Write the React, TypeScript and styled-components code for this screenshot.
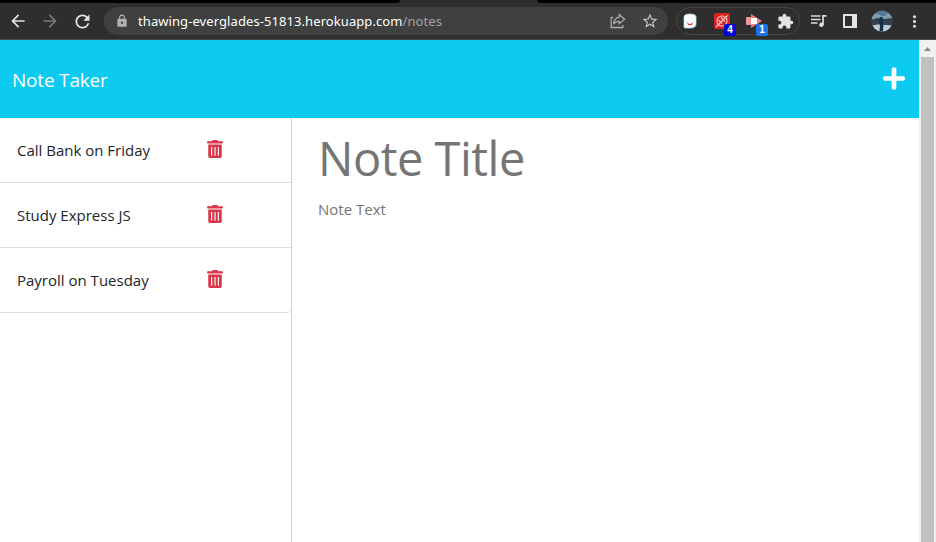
import React from 'react';
import styled, { createGlobalStyle } from 'styled-components';
import { FaPlus, FaTrashAlt } from 'react-icons/fa';
import {
  MdArrowBack,
  MdArrowForward,
  MdRefresh,
  MdLock,
  MdStarOutline,
  MdExtension,
  MdMoreVert,
} from 'react-icons/md';

const GlobalStyle = createGlobalStyle`
  * { box-sizing: border-box; }
  body {
    margin: 0;
    overflow: hidden;
    background: #fff;
    font-family: "Noto Sans", "Open Sans", sans-serif;
  }
  svg { display: block; flex: none; }
`;

const Window = styled.div`
  display: flex;
  flex-direction: column;
  width: 936px;
  height: 542px;
  overflow: hidden;
`;

const TabStrip = styled.div`
  display: flex;
  height: 3px;
  flex: none;
  background: #2e2e2e;
`;

const InactiveTabs = styled.div<{ $width: number; $side: 'left' | 'right' }>`
  width: ${(p) => p.$width}px;
  margin-left: ${(p) => (p.$side === 'right' ? 'auto' : 0)};
  background: #000;
  border-radius: ${(p) => (p.$side === 'left' ? '0 0 4px 0' : '0 0 0 4px')};
`;

const Toolbar = styled.div`
  display: flex;
  align-items: center;
  height: 37px;
  flex: none;
  padding-left: 8px;
  background: #2e2e2e;
  border-bottom: 1px solid #46494a;
`;

const ToolButton = styled.div<{ $width: number; $color?: string }>`
  position: relative;
  display: flex;
  flex: none;
  align-items: center;
  justify-content: center;
  width: ${(p) => p.$width}px;
  height: 28px;
  color: ${(p) => p.$color ?? '#e4e4e4'};
`;

const AddressBar = styled.div`
  display: flex;
  flex: none;
  align-items: center;
  width: 564px;
  height: 28px;
  margin-left: 12px;
  padding-left: 11px;
  border-radius: 14px;
  background: #404040;
  color: #b4b1b8;
`;

const Url = styled.div`
  margin-left: 9px;
  margin-right: auto;
  color: #a3a3a3;
  font-size: 13px;
  line-height: 20px;
  letter-spacing: 0.08px;
  white-space: nowrap;
`;

const Host = styled.span`
  color: #fff;
`;

const Extensions = styled.div`
  display: flex;
  flex: none;
  align-items: center;
  width: 124px;
  height: 28px;
  margin-left: 8px;
  border: 1px solid #454545;
  border-radius: 14px;
`;

const Badge = styled.span<{ $color: string; $left: number }>`
  position: absolute;
  left: ${(p) => p.$left}px;
  top: 17px;
  width: 12px;
  height: 12px;
  border-radius: 2px;
  background: ${(p) => p.$color};
  color: #fff;
  font: bold 10px/12px "Liberation Sans", sans-serif;
  text-align: center;
`;

const Viewport = styled.div`
  display: flex;
  flex: 1;
  min-height: 0;
`;

const Page = styled.div`
  display: flex;
  flex-direction: column;
  flex: 1;
  font-family: "Open Sans", "Noto Sans", sans-serif;
`;

const Header = styled.header`
  display: flex;
  align-items: center;
  justify-content: space-between;
  height: 78px;
  padding: 0 14px 0 12px;
  background: #0dcaf0;
  color: #fff;
`;

const Brand = styled.h1`
  margin: 2px 0 0;
  font-weight: 400;
  font-size: 19px;
  line-height: 30px;
  letter-spacing: -0.2px;
`;

const AddIcon = styled(FaPlus)`
  width: 22px;
  height: 25px;
  margin-top: -2px;
`;

const Content = styled.main`
  display: flex;
  flex: 1;
`;

const Sidebar = styled.aside`
  width: 292px;
  border-right: 1px solid #cdcfd1;
`;

const NoteList = styled.ul`
  margin: 0;
  padding: 0;
  list-style: none;
`;

const NoteItem = styled.li`
  display: flex;
  align-items: center;
  height: 65px;
  padding-left: 17px;
  border-bottom: 1px solid #dcdddf;
  color: #212529;
  font-size: 15px;
  &:last-child {
    border-bottom-right-radius: 4px;
  }
`;

const NoteName = styled.span`
  width: 190px;
  line-height: 24px;
  white-space: nowrap;
`;

const DeleteIcon = styled(FaTrashAlt)`
  width: 16px;
  height: 18px;
  margin-top: -2px;
  color: #d9364a;
`;

const Editor = styled.section`
  flex: 1;
  padding: 8px 26px;
  color: #757575;
`;

const TitleField = styled.div`
  height: 66px;
  font-size: 47px;
  line-height: 64px;
  letter-spacing: -0.5px;
`;

const TextField = styled.div`
  margin-top: 5px;
  font-size: 15px;
  line-height: 24px;
`;

const Scrollbar = styled.div`
  display: flex;
  flex-direction: column;
  align-items: center;
  width: 17px;
  background: #f1f1f1;
`;

const ScrollArrow = styled.div`
  display: flex;
  align-items: center;
  height: 17px;
`;

const ScrollThumb = styled.div`
  flex: 1;
  width: 13px;
  background: #c1c1c1;
`;

const ShareIcon = () => (
  <svg width="16" height="16" viewBox="0 0 16 16" fill="none" stroke="#aaa" strokeWidth="1.3">
    <path d="M3.2 4.5H1.2V14.5H12.8V12" />
    <path d="M9.2 1.5L14.6 6.2L9.2 10.7V8.3C6.2 8.2 4.6 9.2 3.4 11.2C3.8 7.2 5.8 4.7 9.2 4.1Z" />
  </svg>
);

const GhostIcon = () => (
  <svg width="14" height="16" viewBox="0 0 14 16">
    <path d="M1 4Q1 1 7 1T13 4V11Q13 15 7 15H2Q0.5 15 1 12Z" fill="#fff" stroke="#a9d9f2" strokeWidth=".8" />
    <circle cx="4" cy="9" r=".6" fill="#8ac" />
    <circle cx="10" cy="9" r=".6" fill="#8ac" />
    <path d="M4.5 10.3Q7 13 9.5 10.3" fill="none" stroke="#d7372f" strokeWidth="1.2" />
  </svg>
);

const BlockerIcon = () => (
  <svg width="16" height="16" viewBox="0 0 16 16" fill="none" stroke="#f9cbc8">
    <rect width="16" height="16" rx="1.5" fill="#d72323" stroke="none" />
    <circle cx="8" cy="8" r="5" strokeWidth="1.1" />
    <path d="M2 14L13.5 2.5M4.5 7L8 10.5M7 4.5L11 8.5" strokeWidth="1.1" />
  </svg>
);

const CaptureIcon = () => (
  <svg width="16" height="16" viewBox="0 0 16 16">
    <rect y="4" width="10" height="8" rx="1" fill="#f39696" />
    <path d="M5 1L16 8L5 15Z" fill="#ef7f80" />
    <rect x="5" y="5" width="6" height="6" fill="#fff" />
  </svg>
);

const QueueIcon = () => (
  <svg width="17" height="14" viewBox="0 0 17 14" fill="none" stroke="#dedede">
    <path d="M1 2H10.5M1 5.5H10.5M1 9H7.5" strokeWidth="1.5" />
    <path d="M13 11V1.8H16.5" strokeWidth="1.7" />
    <circle cx="11.4" cy="10.8" r="2.2" fill="#dedede" stroke="none" />
  </svg>
);

const SidePanelIcon = () => (
  <svg width="14" height="14" viewBox="0 0 14 14">
    <path d="M0 0H14V14H0ZM2 2V12H9V2Z" fill="#e4e4e4" fillRule="evenodd" />
  </svg>
);

const Avatar = () => (
  <svg width="22" height="22" viewBox="0 0 22 22">
    <defs>
      <clipPath id="avatar">
        <circle cx="11" cy="11" r="10.5" />
      </clipPath>
    </defs>
    <g clipPath="url(#avatar)">
      <rect width="22" height="22" fill="#54779a" />
      <path d="M0 6Q5 2 9 5T17 3L22 7V9H0Z" fill="#819caf" />
      <path d="M0 10L6 8L13 9L22 8V15H0Z" fill="#34414b" />
      <path d="M0 16L6 14.5L16 15L22 16V22H0Z" fill="#bdcbd2" />
      <path d="M9 7H11.5L12.5 13L12 22H8.5L9 14L7.5 12Z" fill="#172f4a" />
    </g>
  </svg>
);

const notes = ['Call Bank on Friday', 'Study Express JS', 'Payroll on Tuesday'];

const BrowserBar = () => (
  <>
    <TabStrip>
      <InactiveTabs $width={400} $side="left" />
      <InactiveTabs $width={399} $side="right" />
    </TabStrip>
    <Toolbar>
      <ToolButton $width={20}><MdArrowBack size={20} /></ToolButton>
      <ToolButton $width={44} $color="#777"><MdArrowForward size={20} /></ToolButton>
      <ToolButton $width={20}><MdRefresh size={21} /></ToolButton>
      <AddressBar>
        <MdLock size={14} />
        <Url><Host>thawing-everglades-51813.herokuapp.com</Host>/notes</Url>
        <ToolButton $width={32}><ShareIcon /></ToolButton>
        <ToolButton $width={32} $color="#c4c4c4"><MdStarOutline size={18} /></ToolButton>
        <ToolButton $width={2} />
      </AddressBar>
      <Extensions>
        <ToolButton $width={26}><GhostIcon /></ToolButton>
        <ToolButton $width={37}><BlockerIcon /><Badge $color="#0000d8" $left={21}>4</Badge></ToolButton>
        <ToolButton $width={28}><CaptureIcon /><Badge $color="#1a73e8" $left={16}>1</Badge></ToolButton>
        <ToolButton $width={35}><MdExtension size={17} /></ToolButton>
      </Extensions>
      <ToolButton $width={36}><QueueIcon /></ToolButton>
      <ToolButton $width={28}><SidePanelIcon /></ToolButton>
      <ToolButton $width={36}><Avatar /></ToolButton>
      <ToolButton $width={29}><MdMoreVert size={19} /></ToolButton>
    </Toolbar>
  </>
);

export default function App() {
  return (
    <Window>
      <GlobalStyle />
      <BrowserBar />
      <Viewport>
        <Page>
          <Header>
            <Brand>Note Taker</Brand>
            <AddIcon />
          </Header>
          <Content>
            <Sidebar>
              <NoteList>
                {notes.map((title) => (
                  <NoteItem key={title}>
                    <NoteName>{title}</NoteName>
                    <DeleteIcon />
                  </NoteItem>
                ))}
              </NoteList>
            </Sidebar>
            <Editor>
              <TitleField>Note Title</TitleField>
              <TextField>Note Text</TextField>
            </Editor>
          </Content>
        </Page>
        <Scrollbar>
          <ScrollArrow>
            <svg width="7" height="4" viewBox="0 0 7 4"><path d="M0 4L3.5 0L7 4Z" fill="#8b8b8b" /></svg>
          </ScrollArrow>
          <ScrollThumb />
        </Scrollbar>
      </Viewport>
    </Window>
  );
}
